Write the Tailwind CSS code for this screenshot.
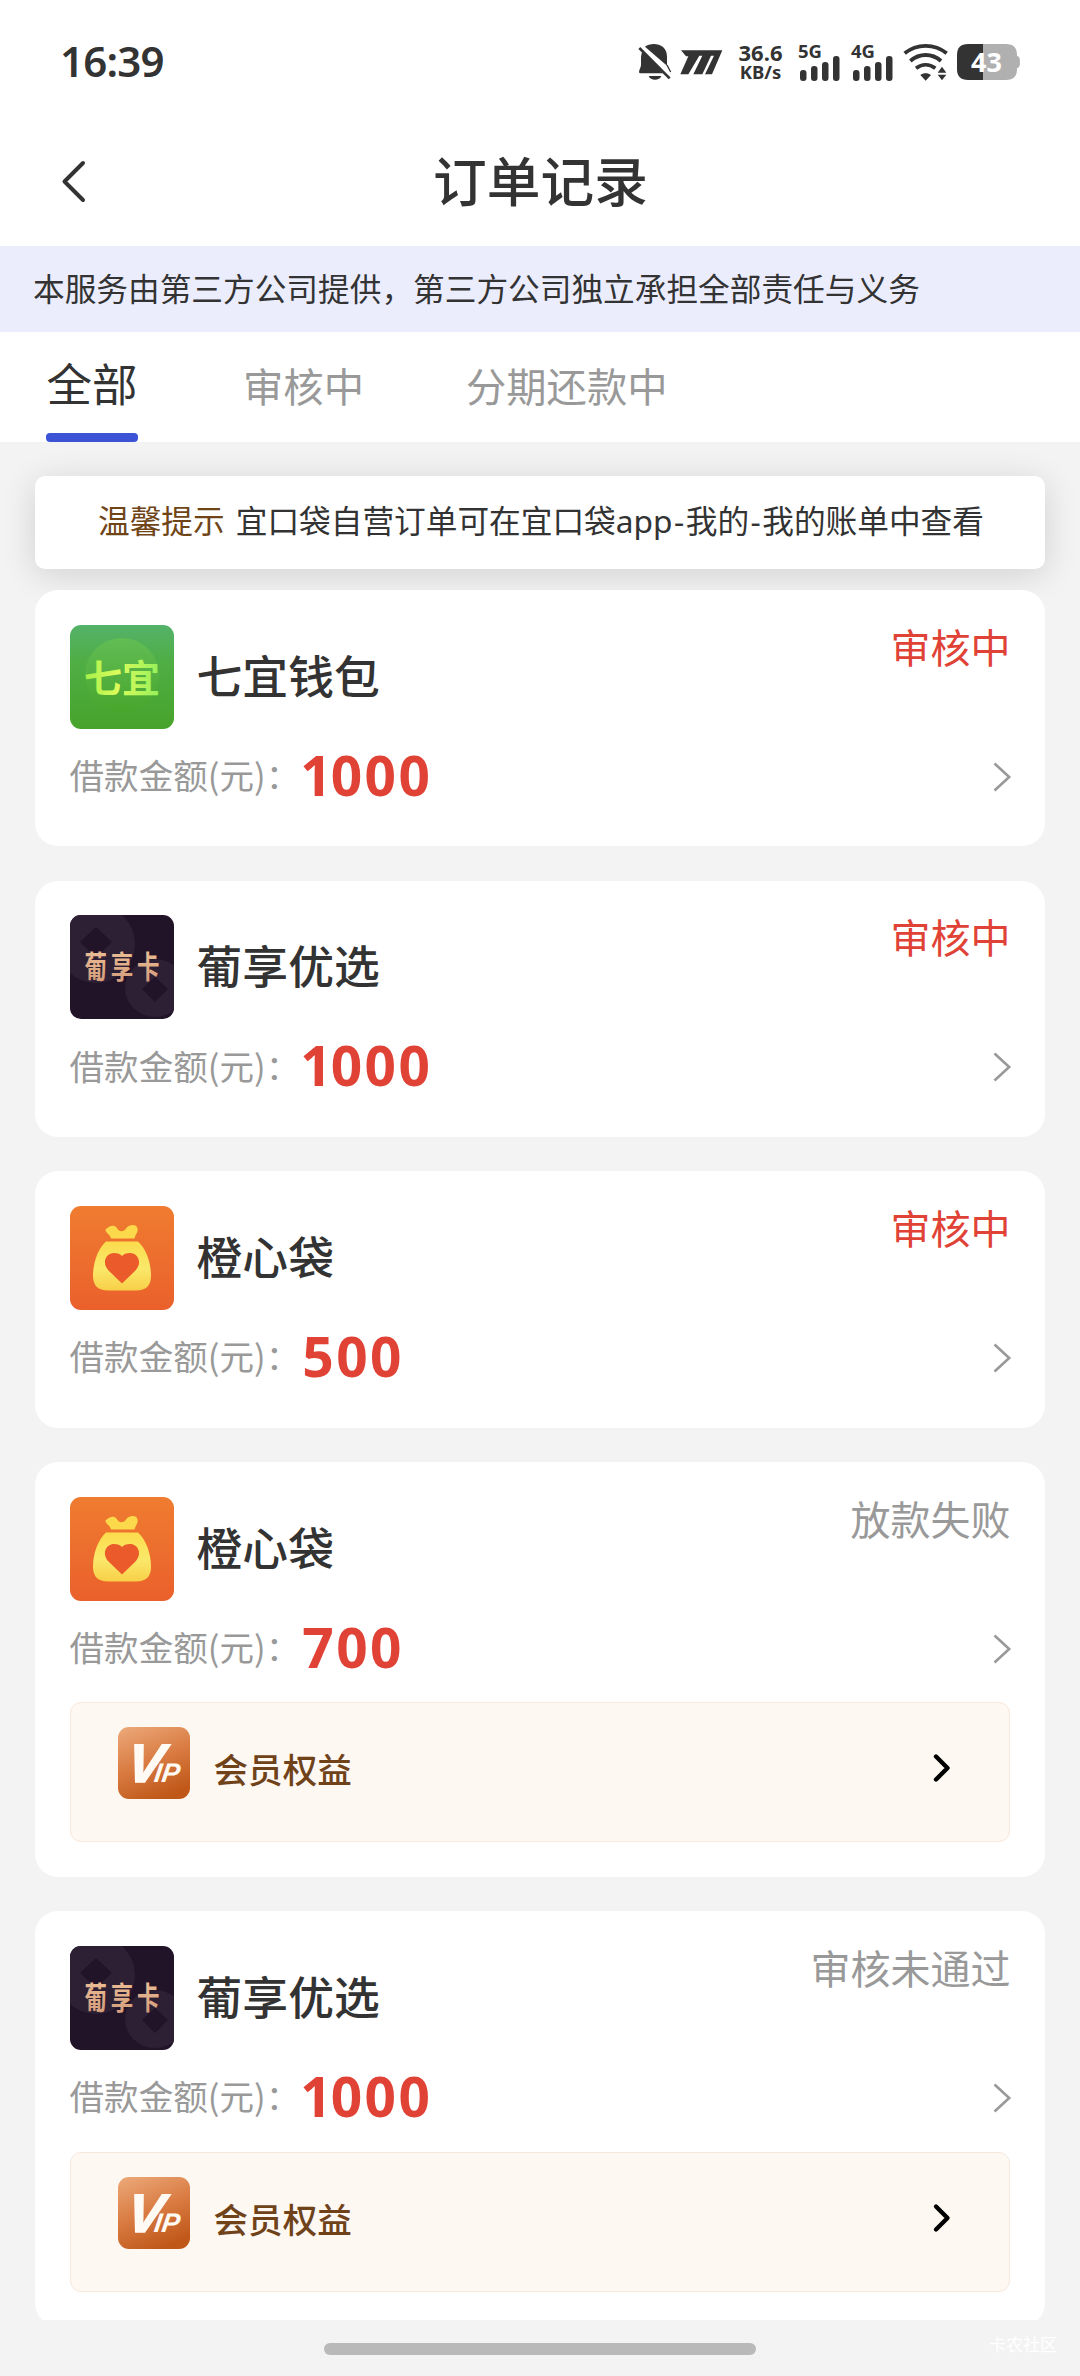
<!DOCTYPE html>
<html lang="zh-CN">
<head>
<meta charset="utf-8">
<title>订单记录</title>
<script src="https://cdn.jsdelivr.net/npm/@tailwindcss/browser@4"></script>
</head>
<body class="bg-[#f3f3f3] font-['Noto_Sans','Noto_Sans_CJK_SC',sans-serif] text-[#333]">
<svg class="absolute size-0" aria-hidden="true">
  <defs>
    <linearGradient id="gGreen" x1="0" y1="0" x2="0" y2="1"><stop offset="0" stop-color="#54b26a"/><stop offset=".35" stop-color="#4fae45"/><stop offset="1" stop-color="#47a32a"/></linearGradient>
    <linearGradient id="gDisc" x1="0" y1="0" x2="0" y2="1"><stop offset="0" stop-color="#62bd55"/><stop offset="1" stop-color="#48a52c"/></linearGradient>
    <linearGradient id="gLime" x1="0" y1="0" x2="1" y2="0"><stop offset="0" stop-color="#a5f04a"/><stop offset=".45" stop-color="#dcfb5c"/><stop offset="1" stop-color="#94f05a"/></linearGradient>
    <linearGradient id="gOrange" x1="0" y1="0" x2="0" y2="1"><stop offset="0" stop-color="#ef7c30"/><stop offset="1" stop-color="#ea602c"/></linearGradient>
    <linearGradient id="gBag" x1="0" y1="0" x2="0" y2="1"><stop offset="0" stop-color="#fbdc4c"/><stop offset=".55" stop-color="#fae86a"/><stop offset="1" stop-color="#f8cf48"/></linearGradient>
    <linearGradient id="gGold" x1="0" y1="0" x2="0" y2="1"><stop offset="0" stop-color="#f2c79c"/><stop offset="1" stop-color="#cf9676"/></linearGradient>
    <linearGradient id="gVip" x1=".2" y1="0" x2=".6" y2="1"><stop offset="0" stop-color="#eaa473"/><stop offset=".5" stop-color="#d97b42"/><stop offset="1" stop-color="#bf5718"/></linearGradient>
  </defs>
  <symbol id="bg-puxiang" viewBox="0 0 104 104">
    <rect width="104" height="104" fill="#211328"/>
    <path fill="#2d1f34" fill-rule="evenodd" d="M26 -10a39 39 0 1 1 0 78a39 39 0 1 1 0-78zM26 12 10 27 26 42 42 27z"/>
    <path fill="#2d1f34" fill-rule="evenodd" d="M85 44a30 29 0 1 1 0 58a30 29 0 1 1 0-58zM85 62 72 74 85 87 98 74z"/>
  </symbol>
  <symbol id="logo-bag" viewBox="0 0 104 104">
    <rect width="104" height="104" fill="url(#gOrange)"/>
    <path fill="#fbd94b" d="M35.500 23.500C39 20 44 18 46.500 21.500C48.500 26 53.500 26.500 56 22.500C58.500 18.500 66.500 17.500 67.500 22.500C68.500 26 65.500 28 64.500 32.500H41C40 28 35 26.500 35.500 23.500z"/>
    <path fill="url(#gBag)" d="M36 35.500H68C76 43 81 56 81 70Q81 84.500 66 84.500H38Q23 84.500 23 70C23 56 28 43 36 35.500z"/>
    <path fill="#eb5a2a" d="M52 77.500 39 65C31 57 36 47 44 47Q49.500 47 52 50Q54.500 47 60 47C68 47 73 57 65 65z"/>
  </symbol>
  <symbol id="arrow" viewBox="0 0 20 32"><path d="M2.500 2.500 17.200 16 2.500 29.500" fill="none" stroke="#999" stroke-width="2.600"/></symbol>
  <symbol id="arrow-bold" viewBox="0 0 20 30"><path d="M4 3.500 15.500 15 4 26.500" fill="none" stroke="#000" stroke-width="4.400" stroke-linecap="round" stroke-linejoin="round"/></symbol>
</svg>

<div class="flex h-[2376px] w-[1080px] flex-col overflow-hidden">
  <header class="shrink-0 bg-white">
    <div class="flex h-[124px] items-center justify-between pr-[60px] pl-[60px]">
      <div class="pb-[2px] text-[42px] leading-none font-semibold tracking-[-0.8px]">16:39</div>
      <div class="flex h-[38px] items-center">
        <svg class="h-[38px] w-[34px]" viewBox="111 68 102 114" fill="#333"><path d="M132 79C146 68 172 68 186 80C194 87 198 98 198 110V136Z"/><path d="M125 91C122 98 120 105 120 113V133C120 141 114 148 114 155Q114 159 119 159H186z"/><path d="M115 83 206 174" fill="none" stroke="#333" stroke-width="8"/><path d="M198 134 209 155" stroke="#333" stroke-width="4"/><path d="M143 167H181C176 182 148 182 143 167z"/></svg>
        <svg class="ml-[8px] h-[38px] w-[43px]" viewBox="238 68 129 114" fill="#333"><path d="M241 90H365L334 162H313L340 106H331L305 162H278L305 106H296L263 162H239L263 108H256z"/></svg>
        <div class="ml-[15px] flex w-[45px] flex-col items-center font-bold"><div class="text-[22px] leading-[19px]">36.6</div><div class="text-[18.500px] leading-[19px]">KB/s</div></div>
        <svg class="ml-[15px] h-[38px] w-[43px] overflow-visible" viewBox="0 0 43 38" fill="#333"><text x="0" y="15" font-size="18.500" font-weight="700" textLength="24">5G</text><rect x="2" y="27" width="6.500" height="11" rx="3"/><rect x="13" y="23" width="6.500" height="15" rx="3"/><rect x="24" y="19" width="6.500" height="19" rx="3"/><rect x="35" y="13" width="6.500" height="25" rx="3"/></svg>
        <svg class="ml-[10px] h-[38px] w-[43px] overflow-visible" viewBox="0 0 43 38" fill="#333"><text x="0" y="15" font-size="18.500" font-weight="700" textLength="24">4G</text><rect x="2" y="27" width="6.500" height="11" rx="3"/><rect x="13" y="23" width="6.500" height="15" rx="3"/><rect x="24" y="19" width="6.500" height="19" rx="3"/><rect x="35" y="13" width="6.500" height="25" rx="3"/></svg>
        <svg class="ml-[9px] h-[38px] w-[45px]" viewBox="909 68 135 114" fill="none" stroke="#333"><path d="M914 99C950 69 1004 69 1040 99M931 122C958 98 996 98 1023 122M948 144C966 130 988 130 1006 144" stroke-width="11.500"/><path d="M961 164C970 157 984 157 993 164L977 181zM1013 157 1026 139 1039 157zM1013 163H1039L1026 180z" fill="#333" stroke="none"/></svg>
        <svg class="ml-[9px] h-[38px] w-[63px]" viewBox="0 0 63 38"><path d="M26 1H49Q60 1 60 12V13Q63 13 63 19T60 25V26Q60 37 49 37H26z" fill="#b0b0b0"/><path d="M26 1H11Q0 1 0 12V26Q0 37 11 37H26z" fill="#333"/><text x="14" y="28.500" font-size="27" font-weight="700" fill="#fff" textLength="31">43</text></svg>
      </div>
    </div>
    <div class="flex h-[122px] items-center justify-between px-[60px] pb-[6px]">
      <svg class="h-[44px] w-[28px]" viewBox="0 0 28 44"><path d="M23 3 4.500 21.500 23 40" fill="none" stroke="#333" stroke-width="4" stroke-linecap="round" stroke-linejoin="round"/></svg>
      <h1 class="pl-[1px] text-[53.700px] leading-none font-medium">订单记录</h1>
      <div class="w-[28px]"></div>
    </div>
  </header>
  <div class="flex h-[86px] shrink-0 items-center bg-[#ebedfd] pl-[33px] text-[31.68px] leading-none">本服务由第三方公司提供，第三方公司独立承担全部责任与义务</div>
  <nav class="relative z-10 flex h-[110px] shrink-0 bg-white pl-[46px] leading-none">
    <div class="flex w-[92px] flex-col items-center justify-between pt-[30px] text-[45.500px]"><span class="whitespace-nowrap">全部</span><span class="h-[9px] w-[92px] rounded-[4px] bg-[#3c53d6]"></span></div>
    <div class="ml-[105px] pt-[35px] text-[40.32px] text-[#999]">审核中</div>
    <div class="ml-[102px] pt-[35px] text-[40.32px] text-[#999]">分期还款中</div>
  </nav>
  <main class="flex h-[1878px] shrink-0 flex-col overflow-hidden px-[35px] pt-[34px]">
    <div class="flex h-[93px] shrink-0 items-center justify-center gap-[11px] rounded-[10px] bg-white pb-[4px] pl-[2px] text-[31.68px] leading-none shadow-[0_6px_35px_rgba(0,0,0,0.14)]"><span class="text-[#6f4518]">温馨提示</span><span>宜口袋自营订单可在宜口袋app<span class="px-[1.500px]">-</span>我的<span class="px-[1.500px]">-</span>我的账单中查看</span></div>
    <div class="relative mt-[21px] flex flex-col gap-[34.560px]">
      <section class="h-[256.200px] rounded-[23px] bg-white px-[34.560px] pt-[34.560px]">
        <div class="flex h-[104px]"><svg class="size-[104px] rounded-[11px]" viewBox="0 0 104 104"><rect width="104" height="104" fill="url(#gGreen)"/><circle cx="52" cy="50" r="37" fill="url(#gDisc)"/><text x="14" y="67" font-family="Noto Sans CJK SC" font-weight="700" font-size="38" fill="url(#gLime)">七宜</text></svg><h2 class="ml-[23px] self-center text-[45.800px] leading-none font-medium">七宜钱包</h2><span class="ml-auto pt-[3px] text-[40px] leading-none text-[#e04236]">审核中</span></div>
        <div class="flex h-[96px] items-center"><span class="pb-[5px] font-['Noto_Sans_CJK_SC',sans-serif] text-[34.56px] leading-none text-[#999]">借款金额(元)：</span><b class="pb-[5px] text-[55px] leading-none font-bold tracking-[2.500px] text-[#e04236]"><span class="tracking-[-1px]">1</span>000</b><svg class="mr-[-2px] ml-auto h-[32px] w-[20px]"><use href="#arrow"/></svg></div>
      </section>
      <section class="h-[256.200px] rounded-[23px] bg-white px-[34.560px] pt-[34.560px]">
        <div class="flex h-[104px]"><svg class="size-[104px] rounded-[11px]" viewBox="0 0 104 104"><use href="#bg-puxiang"/><text x="14.500" y="47" transform="scale(1 1.34)" font-family="Noto Sans CJK SC" font-weight="700" font-size="22.500" letter-spacing="3.800" fill="url(#gGold)">葡享卡</text></svg><h2 class="ml-[23px] self-center text-[45.800px] leading-none font-medium">葡享优选</h2><span class="ml-auto pt-[3px] text-[40px] leading-none text-[#e04236]">审核中</span></div>
        <div class="flex h-[96px] items-center"><span class="pb-[5px] font-['Noto_Sans_CJK_SC',sans-serif] text-[34.56px] leading-none text-[#999]">借款金额(元)：</span><b class="pb-[5px] text-[55px] leading-none font-bold tracking-[2.500px] text-[#e04236]"><span class="tracking-[-1px]">1</span>000</b><svg class="mr-[-2px] ml-auto h-[32px] w-[20px]"><use href="#arrow"/></svg></div>
      </section>
      <section class="h-[256.200px] rounded-[23px] bg-white px-[34.560px] pt-[34.560px]">
        <div class="flex h-[104px]"><svg class="size-[104px] rounded-[11px]"><use href="#logo-bag"/></svg><h2 class="ml-[23px] self-center text-[45.800px] leading-none font-medium">橙心袋</h2><span class="ml-auto pt-[3px] text-[40px] leading-none text-[#e04236]">审核中</span></div>
        <div class="flex h-[96px] items-center"><span class="pb-[5px] font-['Noto_Sans_CJK_SC',sans-serif] text-[34.56px] leading-none text-[#999]">借款金额(元)：</span><b class="ml-[2px] pb-[5px] text-[55px] leading-none font-bold tracking-[2.500px] text-[#e04236]">500</b><svg class="mr-[-2px] ml-auto h-[32px] w-[20px]"><use href="#arrow"/></svg></div>
      </section>
      <section class="h-[414.500px] rounded-[23px] bg-white px-[34.560px] pt-[34.560px]">
        <div class="flex h-[104px]"><svg class="size-[104px] rounded-[11px]"><use href="#logo-bag"/></svg><h2 class="ml-[23px] self-center text-[45.800px] leading-none font-medium">橙心袋</h2><span class="ml-auto pt-[3px] text-[40px] leading-none text-[#999]">放款失败</span></div>
        <div class="flex h-[96px] items-center"><span class="pb-[5px] font-['Noto_Sans_CJK_SC',sans-serif] text-[34.56px] leading-none text-[#999]">借款金额(元)：</span><b class="ml-[2px] pb-[5px] text-[55px] leading-none font-bold tracking-[2.500px] text-[#e04236]">700</b><svg class="mr-[-2px] ml-auto h-[32px] w-[20px]"><use href="#arrow"/></svg></div>
        <div class="mt-[5px] flex h-[140px] rounded-[11px] border border-[#f7e8de] bg-[#fdf8f1] px-[47px] pt-[24px]"><svg class="size-[72px] rounded-[11px]" viewBox="0 0 72 72"><rect width="72" height="72" fill="url(#gVip)"/><text x="8" y="55" transform="translate(7 0) skewX(-8)" font-family="Liberation Sans" font-weight="700" font-style="italic" fill="#fffaf3"><tspan font-size="54" stroke="#fffaf3" stroke-width="1.500">V</tspan><tspan x="36" font-size="27">IP</tspan></text></svg><span class="ml-[24px] pt-[26px] text-[34.56px] leading-none font-medium text-[#6f421a]">会员权益</span><svg class="mt-[26px] mr-[10px] ml-auto h-[30px] w-[20px]"><use href="#arrow-bold"/></svg></div>
      </section>
      <section class="h-[414.500px] rounded-[23px] bg-white px-[34.560px] pt-[34.560px]">
        <div class="flex h-[104px]"><svg class="size-[104px] rounded-[11px]" viewBox="0 0 104 104"><use href="#bg-puxiang"/><text x="14.500" y="47" transform="scale(1 1.34)" font-family="Noto Sans CJK SC" font-weight="700" font-size="22.500" letter-spacing="3.800" fill="url(#gGold)">葡享卡</text></svg><h2 class="ml-[23px] self-center text-[45.800px] leading-none font-medium">葡享优选</h2><span class="ml-auto pt-[3px] text-[40px] leading-none text-[#999]">审核未通过</span></div>
        <div class="flex h-[96px] items-center"><span class="pb-[5px] font-['Noto_Sans_CJK_SC',sans-serif] text-[34.56px] leading-none text-[#999]">借款金额(元)：</span><b class="pb-[5px] text-[55px] leading-none font-bold tracking-[2.500px] text-[#e04236]"><span class="tracking-[-1px]">1</span>000</b><svg class="mr-[-2px] ml-auto h-[32px] w-[20px]"><use href="#arrow"/></svg></div>
        <div class="mt-[6px] flex h-[140px] rounded-[11px] border border-[#f7e8de] bg-[#fdf8f1] px-[47px] pt-[24px]"><svg class="size-[72px] rounded-[11px]" viewBox="0 0 72 72"><rect width="72" height="72" fill="url(#gVip)"/><text x="8" y="55" transform="translate(7 0) skewX(-8)" font-family="Liberation Sans" font-weight="700" font-style="italic" fill="#fffaf3"><tspan font-size="54" stroke="#fffaf3" stroke-width="1.500">V</tspan><tspan x="36" font-size="27">IP</tspan></text></svg><span class="ml-[24px] pt-[26px] text-[34.56px] leading-none font-medium text-[#6f421a]">会员权益</span><svg class="mt-[26px] mr-[10px] ml-auto h-[30px] w-[20px]"><use href="#arrow-bold"/></svg></div>
      </section>
    </div>
  </main>
  <footer class="relative flex h-[56px] shrink-0 justify-center pt-[23px]">
    <div class="h-[12px] w-[432px] rounded-full bg-[#b9b9b9]"></div>
    <span class="absolute top-[16px] right-[23px] text-[17px] leading-none text-white">卡农社区</span>
  </footer>
</div>
</body>
</html>
